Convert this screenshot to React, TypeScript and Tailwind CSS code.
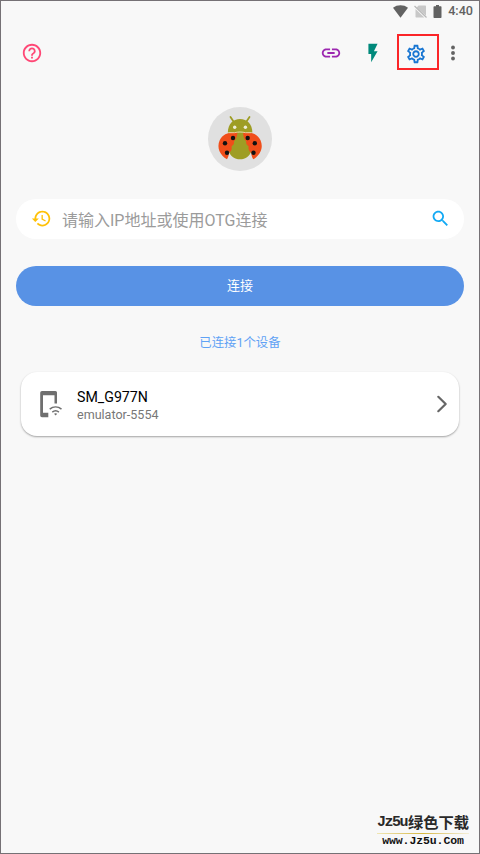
import type { ReactNode } from 'react';

function MaterialIcon({ className, children }: { className: string; children: ReactNode }) {
  return (
    <svg viewBox="0 0 24 24" fill="currentColor" className={`shrink-0 ${className}`}>
      {children}
    </svg>
  );
}

function StatusBar() {
  return (
    <div className="flex h-[20px] items-center justify-end pr-[6px] text-[#626262]">
      <svg viewBox="0 0 15 13" className="mr-[6px] h-[13px] w-[15px]" fill="currentColor">
        <path d="M0 2.800C2.200 1.100 4.700.3 7.500.3s5.300.8 7.500 2.500L7.500 12.700z" />
      </svg>
      <svg viewBox="0 0 13 13" className="mr-[6px] h-[13px] w-[13px]">
        <path d="M4.600.5H11c.6 0 1 .4 1 1v9.300L2.600 2.400zM1.500 4l8.800 8.500H2.500c-.6 0-1-.4-1-1z" fill="#c8c8c8" />
        <path d="M.5 1l12 11.500" stroke="#b8b8b8" strokeWidth="1.200" />
      </svg>
      <svg viewBox="0 0 9 13" className="mr-[6px] h-[13px] w-[9px]" fill="currentColor">
        <path d="M3 0h3v1.300h1.800c.4 0 .7.3.7.7v10.200c0 .4-.3.7-.7.7H1.200c-.4 0-.7-.3-.7-.7V2c0-.4.3-.7.7-.7H3z" />
      </svg>
      <span className="mt-px text-[12.600px] leading-none font-medium">4:40</span>
    </div>
  );
}

function Toolbar() {
  return (
    <div className="flex h-[64px] items-center pr-[15px] pl-5">
      <MaterialIcon className="h-[22px] w-[22px] text-[#ff4876]">
        <path d="M11 18h2v-2h-2v2zm1-16C6.480 2 2 6.480 2 12s4.480 10 10 10 10-4.480 10-10S17.520 2 12 2zm0 18c-4.410 0-8-3.590-8-8s3.590-8 8-8 8 3.590 8 8-3.590 8-8 8zm0-14c-2.210 0-4 1.790-4 4h2c0-1.100.9-2 2-2s2 .9 2 2c0 2-3 1.750-3 5h2c0-2.250 3-2.500 3-5 0-2.210-1.790-4-4-4z" />
      </MaterialIcon>
      <MaterialIcon className="ml-auto h-[22px] w-[22px] text-[#9c27b0]">
        <path d="M3.900 12c0-1.710 1.390-3.100 3.100-3.100h4V7H7c-2.760 0-5 2.240-5 5s2.240 5 5 5h4v-1.900H7c-1.710 0-3.100-1.390-3.100-3.100zM8 13h8v-2H8v2zm9-6h-4v1.900h4c1.710 0 3.100 1.390 3.100 3.100s-1.390 3.100-3.100 3.100h-4V17h4c2.760 0 5-2.240 5-5s-2.240-5-5-5z" />
      </MaterialIcon>
      <MaterialIcon className="ml-[20px] h-[22px] w-[22px] text-[#00897b]">
        <path d="M7 2v11h3v9l7-12h-4l4-8z" />
      </MaterialIcon>
      <div className="mt-[-2px] ml-[13px] flex h-[36px] w-[42px] items-center justify-center border-2 border-[#fb2528] pt-[3px] pr-[4px]">
        <MaterialIcon className="h-[22px] w-[22px] text-[#1976d2]">
          <path d="M19.430 12.980c.04-.32.07-.64.07-.98 0-.34-.03-.66-.07-.98l2.110-1.650c.19-.15.24-.42.12-.64l-2-3.460c-.09-.16-.26-.25-.44-.25-.06 0-.12.01-.17.03l-2.490 1c-.52-.4-1.080-.73-1.690-.98l-.38-2.650C14.460 2.180 14.250 2 14 2h-4c-.25 0-.46.18-.49.42l-.38 2.650c-.61.25-1.170.59-1.690.98l-2.490-1c-.06-.02-.12-.03-.18-.03-.17 0-.34.09-.43.25l-2 3.460c-.13.22-.07.49.12.64l2.110 1.650c-.04.32-.07.65-.07.98 0 .33.03.66.07.98l-2.110 1.650c-.19.15-.24.42-.12.64l2 3.460c.09.16.26.25.44.25.06 0 .12-.01.17-.03l2.490-1c.52.4 1.080.73 1.690.98l.38 2.650c.03.24.24.42.49.42h4c.25 0 .46-.18.49-.42l.38-2.650c.61-.25 1.170-.59 1.690-.98l2.490 1c.06.02.12.03.18.03.17 0 .34-.09.43-.25l2-3.460c.12-.22.07-.49-.12-.64l-2.110-1.650zm-1.980-1.710c.04.31.05.52.05.73 0 .21-.02.43-.05.73l-.14 1.130.89.7 1.080.84-.7 1.210-1.270-.51-1.040-.42-.9.68c-.43.32-.84.56-1.250.73l-1.060.43-.16 1.130-.2 1.350h-1.400l-.19-1.350-.16-1.130-1.060-.43c-.43-.18-.83-.41-1.230-.71l-.91-.7-1.060.43-1.270.51-.7-1.210 1.080-.84.89-.7-.14-1.130c-.03-.31-.05-.54-.05-.74s.02-.43.05-.73l.14-1.130-.89-.7-1.080-.84.7-1.210 1.270.51 1.040.42.9-.68c.43-.32.84-.56 1.250-.73l1.060-.43.16-1.130.2-1.350h1.390l.19 1.350.16 1.130 1.060.43c.43.18.83.41 1.230.71l.91.7 1.060-.43 1.270-.51.7 1.210-1.070.85-.89.7.14 1.130zM12 8c-2.210 0-4 1.790-4 4s1.790 4 4 4 4-1.790 4-4-1.790-4-4-4zm0 6c-1.100 0-2-.9-2-2s.9-2 2-2 2 .9 2 2-.9 2-2 2z" />
        </MaterialIcon>
      </div>
      <MaterialIcon className="ml-[3px] h-[22px] w-[22px] text-[#636363]">
        <circle cx="12" cy="6" r="2.100" />
        <circle cx="12" cy="12" r="2.100" />
        <circle cx="12" cy="18" r="2.100" />
      </MaterialIcon>
    </div>
  );
}

function Ladybug() {
  return (
    <svg viewBox="0 0 64 64" className="mx-auto h-16 w-16">
      <circle cx="32" cy="32" r="32" fill="#e0e0e0" />
      <g fill="#9e9d24">
        <path d="M22.500 10l4 6M41.500 10l-4 6" stroke="#9e9d24" strokeWidth="1.800" strokeLinecap="round" />
        <path d="M19.800 25.500C20 17 25 12 32 12s12.200 5 12.400 13.500z" />
        <path d="M23.500 28.500c2-2.200 4.800-3.300 8.500-3.300s6.500 1.100 8.500 3.300l3 15C42 49 37.500 52.300 32 52.300S22 49 20.500 43.500z" />
      </g>
      <g fill="#f04e1a">
        <path d="M29.500 25.300c-8.500-.9-15 1.800-17.800 8-3.400 7.700.5 15.200 7.300 19 1.400-2.300 1.800-4.300 2-6.500 2.500-1.600 3-3.900 2.600-6.600 2.600-2 2.700-3 2.300-4.800 2.400-2.400 3.300-5.400 3.600-9.100z" />
        <path d="M35 25.300c8.500-.9 14.700 1.800 17.500 8 3.400 7.700-.5 15.200-7.300 19-1.400-2.300-1.800-4.300-2-6.500-2.500-1.600-3-3.900-2.600-6.600-2.600-2-2.700-3-2.300-4.800-2.400-2.400-3-5.400-3.300-9.100z" />
      </g>
      <path d="M20.500 25.700h6c4-1 7-1 11 0h6" fill="none" stroke="#dfe0a8" strokeWidth=".9" />
      <g fill="#eeeed8">
        <circle cx="26.700" cy="20.300" r="1.700" />
        <circle cx="37.400" cy="20.300" r="1.700" />
      </g>
      <g fill="#111">
        <circle cx="25" cy="31" r="2.200" />
        <circle cx="17" cy="36.300" r="2.200" />
        <circle cx="19" cy="45.700" r="2.200" />
        <circle cx="39.700" cy="31" r="2.200" />
        <circle cx="46.800" cy="36.300" r="2.200" />
        <circle cx="45.500" cy="45.700" r="2.200" />
      </g>
    </svg>
  );
}

function AddressInput() {
  return (
    <div className="mt-[28px] flex h-10 items-center rounded-full bg-white pr-[13px] pl-[15px]">
      <MaterialIcon className="mb-px h-[21px] w-[21px] text-[#ffc107]">
        <path d="M13 3c-4.970 0-9 4.030-9 9H1l3.890 3.890.07.14L9 12H6c0-3.870 3.130-7 7-7s7 3.130 7 7-3.130 7-7 7c-1.930 0-3.680-.79-4.940-2.060l-1.420 1.420C8.270 19.990 10.510 21 13 21c4.970 0 9-4.030 9-9s-4.030-9-9-9zm-1 5v5l4.280 2.540.72-1.210-3.500-2.080V8H12z" />
      </MaterialIcon>
      <span className="mt-[3px] ml-[10px] text-[16px] leading-none text-[#9b9b9b]">请输入IP地址或使用OTG连接</span>
      <MaterialIcon className="mb-px ml-auto h-[21px] w-[21px] text-[#11a9f4]">
        <path d="M15.500 14h-.79l-.28-.27C15.410 12.590 16 11.110 16 9.500 16 5.910 13.090 3 9.500 3S3 5.910 3 9.500 5.910 16 9.500 16c1.610 0 3.090-.59 4.230-1.570l.27.28v.79l5 4.990L20.490 19l-4.990-5zm-6 0C7.010 14 5 11.990 5 9.500S7.010 5 9.500 5 14 7.010 14 9.500 11.990 14 9.500 14z" />
      </MaterialIcon>
    </div>
  );
}

function DeviceCard() {
  return (
    <div className="mx-[5px] mt-[19px] flex h-[64px] items-center rounded-[16px] bg-white pr-[11px] pl-[18px] shadow-[0_1px_2px_rgba(0,0,0,0.35)]">
      <svg viewBox="0 0 24 28" className="h-[28px] w-[24px]" fill="#6f6f6f">
        <path d="M3 1h13.500A1.600 1.600 0 0 1 18 2.600V13.500H15.500V5.300H4v17.400h5.300V27.300H3A1.800 1.800 0 0 1 1.200 25.500V2.800A1.800 1.800 0 0 1 3 1z" />
        <path d="M10.700 19.200c3.500-2.900 8.300-2.900 11.800 0M13.300 22.100c2-1.600 4.600-1.600 6.600 0" fill="none" stroke="#6f6f6f" strokeWidth="1.500" />
        <path d="M15 23.800c1-.7 2.200-.7 3.200 0l-1.600 1.700z" />
      </svg>
      <div className="mt-[3px] ml-[14px]">
        <div className="text-[14.200px] leading-[18px] text-black">SM_G977N</div>
        <div className="text-[12.550px] leading-[18px] text-[#777]">emulator-5554</div>
      </div>
      <svg viewBox="0 0 12 18" className="ml-auto h-[18px] w-[12px]" fill="none" stroke="#666" strokeWidth="2.200" strokeLinecap="round" strokeLinejoin="round">
        <path d="M2.300 1.800L9.700 9l-7.400 7.200" />
      </svg>
    </div>
  );
}

function Watermark() {
  return (
    <div className="mt-auto mr-[10px] mb-[5px] flex w-[92px] flex-col items-center self-end whitespace-nowrap text-[#292929]">
      <div className="flex items-center leading-[20px] font-bold">
        <span className="font-['Liberation_Mono'] text-[15px] tracking-[-1.500px]">Jz5u</span>
        <span className="ml-px text-[15.300px]">绿色下载</span>
      </div>
      <div className="h-[1.500px] w-full bg-gradient-to-r from-[#f0e6b4] via-[#d6b73c] to-[#f4efd8]" />
      <div className="font-['Liberation_Mono'] text-[11.500px] leading-[14px] font-bold tracking-[-0.100px] text-[#111]">www.Jz5u.Com</div>
    </div>
  );
}

export default function App() {
  return (
    <div className="flex h-[854px] w-[480px] flex-col overflow-hidden border border-[#757175] bg-[#f8f8f8] font-[Roboto,'Noto_Sans_CJK_SC',sans-serif]">
      <StatusBar />
      <Toolbar />
      <main className="mt-[22px] flex flex-col px-[15px]">
        <Ladybug />
        <AddressInput />
        <button className="mt-[27px] h-[40px] rounded-full bg-[#5892e5] text-[13px] text-white">连接</button>
        <p className="mt-[27px] text-center text-[12.400px] leading-[20px] text-[#5fa2f5]">已连接1个设备</p>
        <DeviceCard />
      </main>
      <Watermark />
    </div>
  );
}
